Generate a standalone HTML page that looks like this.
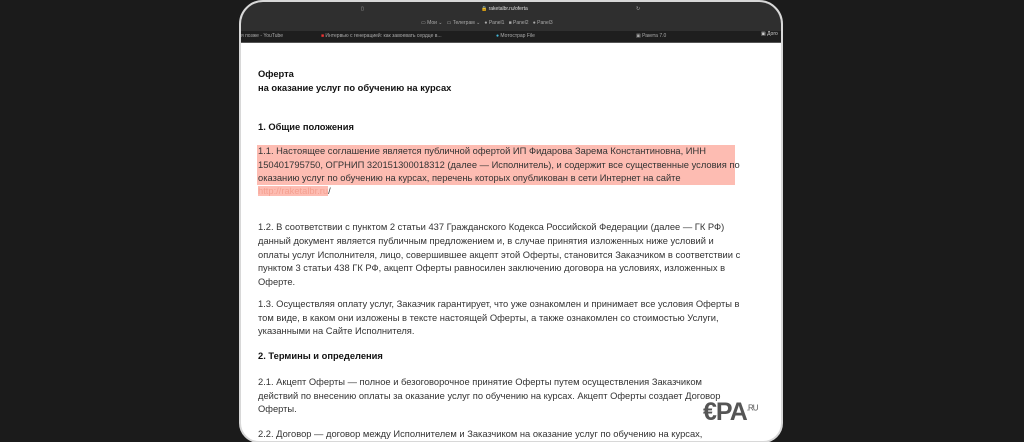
<!DOCTYPE html>
<html><head><meta charset="utf-8"><style>
html,body{margin:0;width:1024px;height:442px;overflow:hidden}
body{background:#1b1b1b;position:relative;font-family:"Liberation Sans",sans-serif}
.frame{position:absolute;left:239px;top:0;width:544px;height:443px;border:2px solid #d8d8d8;border-radius:24px 24px 20px 20px;overflow:hidden;background:#fff;box-sizing:border-box}
.bar{position:absolute;left:0;top:0;width:100%;height:29px;background:#2f2f2f}
.tabs{position:absolute;left:0;top:29px;width:100%;height:11px;background:#1e1e1e;border-bottom:1px solid #555}
.t{position:absolute;font-size:5px;color:#aaa;white-space:nowrap}
.l{position:absolute;left:17px;font-size:9.35px;color:#333;white-space:nowrap}
.b{font-weight:bold;color:#111}
.hl{position:absolute;left:16px;top:143px;width:478px;height:40px;background:#fdbcb2}
.cpa{position:absolute;left:703px;top:398px;font-size:25px;font-weight:bold;color:#555;letter-spacing:-1px;font-family:"Liberation Sans Narrow","Liberation Sans",sans-serif}
</style></head><body>
<div class="frame">
<div class="bar"></div>
<div class="t" style="left:240px;top:4px;color:#ddd">🔒 raketalbr.ru/oferta</div>
<div class="t" style="left:120px;top:4px">▯</div>
<div class="t" style="left:395px;top:4px">↻</div>
<div class="t" style="left:180px;top:18px">▭ Мои ⌄ &nbsp; ▭ Телеграм ⌄ &nbsp; ● Panel1 &nbsp; ■ Panel2 &nbsp; ● Panel3</div>
<div class="tabs"></div>
<div class="t" style="left:0;top:31px">я позже - YouTube</div>
<div class="t" style="left:80px;top:31px"><span style="color:#e33">■</span> Интервью с генерацией: как завоевать сердце в...</div>
<div class="t" style="left:255px;top:31px"><span style="color:#4bd">●</span> Мотострар File</div>
<div class="t" style="left:395px;top:31px">▣ Ракета 7.0</div>
<div class="hl"></div>
<div class="l b" style="top:67px">Оферта</div>
<div class="l b" style="top:81px">на оказание услуг по обучению на курсах</div>
<div class="l b" style="top:120px">1. Общие положения</div>
<div class="l" style="top:144px">1.1. Настоящее соглашение является публичной офертой ИП Фидарова Зарема Константиновна, ИНН</div>
<div class="l" style="top:158px">150401795750, ОГРНИП 320151300018312 (далее — Исполнитель), и содержит все существенные условия по</div>
<div class="l" style="top:171px">оказанию услуг по обучению на курсах, перечень которых опубликован в сети Интернет на сайте</div>
<div class="l" style="top:184px"><span style="background:#fdbcb2;color:#f4a090">http://raketalbr.ru</span>/</div>
<div class="l" style="top:220px">1.2. В соответствии с пунктом 2 статьи 437 Гражданского Кодекса Российской Федерации (далее — ГК РФ)</div>
<div class="l" style="top:234px">данный документ является публичным предложением и, в случае принятия изложенных ниже условий и</div>
<div class="l" style="top:248px">оплаты услуг Исполнителя, лицо, совершившее акцепт этой Оферты, становится Заказчиком в соответствии с</div>
<div class="l" style="top:261px">пунктом 3 статьи 438 ГК РФ, акцепт Оферты равносилен заключению договора на условиях, изложенных в</div>
<div class="l" style="top:275px">Оферте.</div>
<div class="l" style="top:297px">1.3. Осуществляя оплату услуг, Заказчик гарантирует, что уже ознакомлен и принимает все условия Оферты в</div>
<div class="l" style="top:311px">том виде, в каком они изложены в тексте настоящей Оферты, а также ознакомлен со стоимостью Услуги,</div>
<div class="l" style="top:324px">указанными на Сайте Исполнителя.</div>
<div class="l b" style="top:349px">2. Термины и определения</div>
<div class="l" style="top:375px">2.1. Акцепт Оферты — полное и безоговорочное принятие Оферты путем осуществления Заказчиком</div>
<div class="l" style="top:389px">действий по внесению оплаты за оказание услуг по обучению на курсах. Акцепт Оферты создает Договор</div>
<div class="l" style="top:402px">Оферты.</div>
<div class="l" style="top:427px">2.2. Договор — договор между Исполнителем и Заказчиком на оказание услуг по обучению на курсах,</div>
</div>
<div class="t" style="left:761px;top:31px;color:#ccc">▣ Дого</div>
<div class="cpa">€PA<sup style="font-size:8px;font-weight:normal">.RU</sup></div>
</body></html>
